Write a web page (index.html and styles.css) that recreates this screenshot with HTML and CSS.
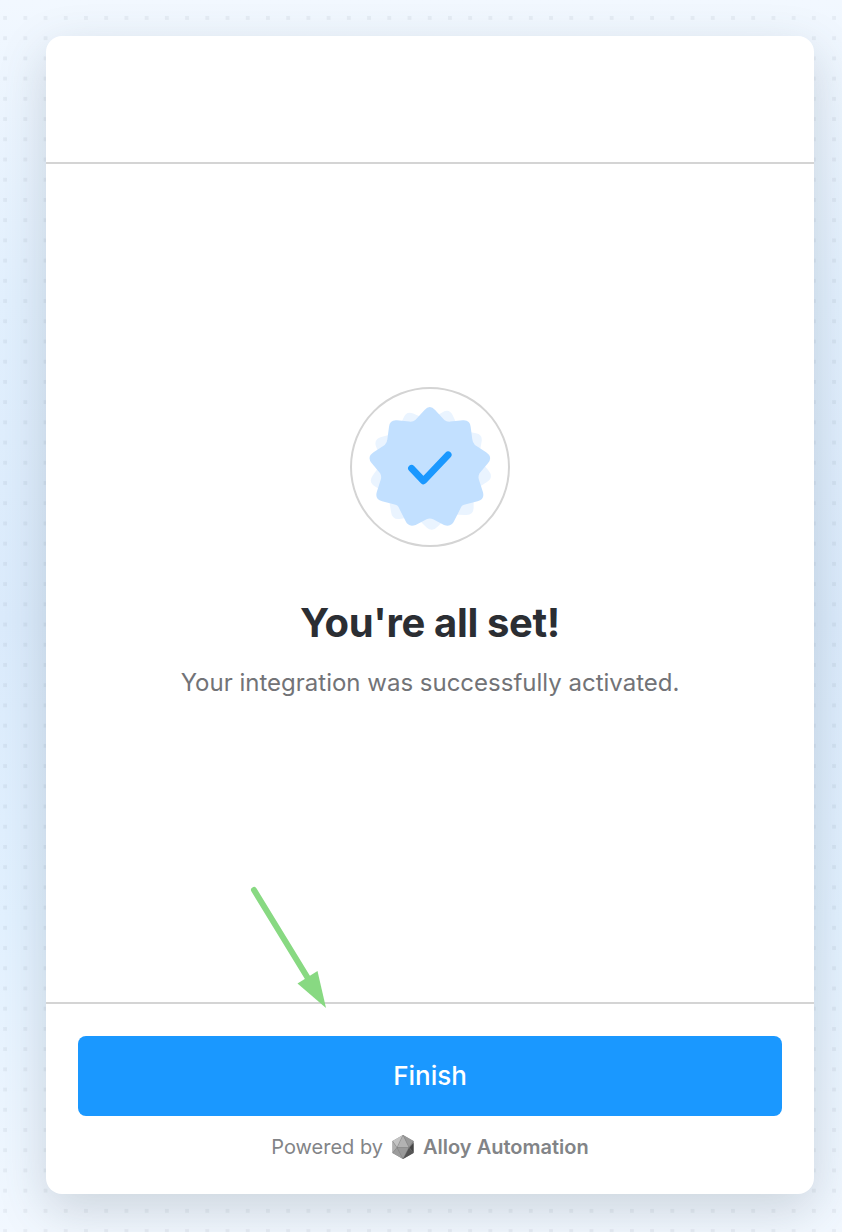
FILE: index.html
```html
<!DOCTYPE html>
<html lang="en">
<head>
<meta charset="utf-8">
<title>You're all set!</title>
<link rel="stylesheet" href="styles.css">
</head>
<body>
<main class="modal">
  <header class="modal-header"></header>
  <section class="modal-body">
    <div class="badge">
      <svg class="badge-icon" viewBox="33 25 474 474">
        <defs>
          <path id="seal" d="M254 87Q270 69 286 87L314 117Q321 123 332 122L370 118Q392 116 394 138L399 176Q400 187 407 193L441 215Q462 229 447 248L421 279Q416 288 419 298L431 335Q438 358 415 364L377 374Q366 376 363 386L345 422Q335 445 313 436L280 419Q270 414 260 419L227 436Q205 445 195 422L177 386Q174 376 163 374L125 364Q102 358 109 335L121 298Q124 288 119 279L93 248Q78 229 99 215L133 193Q140 187 141 176L146 138Q148 116 170 118L208 122Q219 123 226 117Z"/>
        </defs>
        <use href="#seal" class="seal-back" transform="translate(1 5) rotate(17.5 270 262)"/>
        <use href="#seal" class="seal-front" transform="translate(-.5 2)"/>
        <path class="check" d="M214 266L250 304L325 225"/>
      </svg>
    </div>
    <h1 class="title">You're all set!</h1>
    <p class="subtitle">Your integration was successfully activated.</p>
  </section>
  <footer class="modal-footer">
    <button class="finish">Finish</button>
    <div class="powered">
      <span class="by">Powered by</span>
      <svg class="gem" viewBox="0 0 22 24">
        <path fill="#8b8b8b" d="M11 0L21.5 6V18L11 24L.5 18V6Z"/>
        <path fill="#c4c4c4" d="M11 0L.5 6L5 12.5Z"/>
        <path fill="#b2b2b2" d="M11 0L5 12.5H17Z"/>
        <path fill="#999" d="M11 0L21.5 6L17 12.5Z"/>
        <path fill="#b0b0b0" d="M.5 6V18L5 12.5Z"/>
        <path fill="#9c9c9c" d="M.5 18L5 12.5L11 24Z"/>
        <path fill="#999" d="M5 12.5H17L11 24Z"/>
        <path fill="#808080" d="M21.5 6L17 12.5L21.5 18Z"/>
        <path fill="#555" d="M17 12.5L21.5 18L11 24Z"/>
        <path fill="#444" d="M21.5 8V18L17.5 12.5Z"/>
        <path fill="none" stroke="#777" stroke-width=".35" d="M11 0L5 12.5H17ZM5 12.5L11 24L17 12.5M.5 6L5 12.5L.5 18M21.5 6L17 12.5"/>
      </svg>
      <strong class="brand">Alloy Automation</strong>
    </div>
  </footer>
  <svg class="pointer" viewBox="0 0 80 124">
    <path class="pointer-line" d="M6 6L61 96"/>
    <path class="pointer-head" d="M49.5 99.5L69.5 87L78 124Z"/>
  </svg>
</main>
</body>
</html>
```
FILE: styles.css
```css
* { box-sizing: border-box; }

body {
  margin: 0;
  height: 1232px;
  padding: 36px 28px 38px 46px;
  overflow: hidden;
  font-family: Inter, "Liberation Sans", sans-serif;
  background:
    conic-gradient(from 0deg at 4px 4px, transparent 270deg, rgba(80, 90, 110, .075) 0) 3.2px -4.2px / 20.23px 20.23px,
    linear-gradient(#f2f8ff 0, #e2f0fe 300px, #dbebfc 620px, #e2f1ff 920px, #f2f8ff 1232px);
}

.modal {
  position: relative;
  display: flex;
  flex-direction: column;
  height: 1158px;
  background: #fff;
  border-radius: 16px;
  box-shadow: 0 16px 48px rgba(70, 85, 95, .21);
}

.modal-header {
  height: 128px;
  border-bottom: 2px solid #d4d4d4;
}

.modal-body {
  flex: 1;
  display: flex;
  flex-direction: column;
  align-items: center;
  padding-top: 223px;
}

.badge {
  width: 160px;
  height: 160px;
  border: 2px solid #d4d4d4;
  border-radius: 50%;
}

.badge-icon {
  display: block;
  width: 156px;
  height: 156px;
}

.seal-back { fill: #eaf4ff; }
.seal-front { fill: #c2e0ff; }

.check {
  fill: none;
  stroke: #1a98ff;
  stroke-width: 21;
  stroke-linecap: round;
  stroke-linejoin: round;
}

.title {
  margin: 52px 0 0;
  font-size: 40px;
  line-height: 48px;
  font-weight: 700;
  letter-spacing: -.35px;
  color: #2b2e33;
}

.subtitle {
  margin: 20px 0 0;
  font-size: 24px;
  line-height: 32px;
  color: #727377;
}

.modal-footer {
  height: 192px;
  padding: 32px;
  border-top: 2px solid #d4d4d4;
}

.finish {
  display: block;
  width: 100%;
  height: 80px;
  border: 0;
  border-radius: 8px;
  background: #1a98ff;
  color: #fff;
  font: 500 26px/32px Inter, "Liberation Sans", sans-serif;
}

.powered {
  display: flex;
  justify-content: center;
  align-items: center;
  height: 24px;
  margin-top: 19px;
  font-size: 20px;
  color: #828487;
}

.gem {
  width: 22px;
  height: 24px;
  margin: 0 9.5px 0 8.5px;
}

.brand { font-weight: 600; }

.pointer {
  position: absolute;
  left: 202px;
  top: 848px;
  width: 80px;
  height: 124px;
}

.pointer-line {
  stroke: #88d982;
  stroke-width: 6;
  stroke-linecap: round;
}

.pointer-head { fill: #88d982; }
```
